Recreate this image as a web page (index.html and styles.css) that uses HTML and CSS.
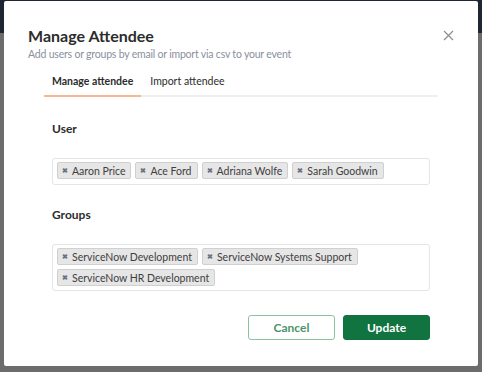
FILE: index.html
```html
<!DOCTYPE html>
<html lang="en">
<head>
    <meta charset="UTF-8">
    <title>Manage Attendee</title>
    <link rel="stylesheet" href="styles.css">
</head>
<body>

<div class="modal">
    <div class="modal-header">
        <div>
            <h1>Manage Attendee</h1>
            <p class="subtitle">Add users or groups by email or import via csv to your event</p>
        </div>
        <svg class="modal-close" width="11" height="11" viewBox="0 0 11 11">
            <path d="M1 1 L10 10 M10 1 L1 10" stroke="#8c9095" stroke-width="1.3" fill="none"/>
        </svg>
    </div>

    <div class="modal-body">
        <div class="tabs">
            <span class="tab active">Manage attendee</span>
            <span class="tab">Import attendee</span>
        </div>

        <div class="field">
            <label>User</label>
            <div class="chip-box">
                <span class="chip"><b>&#10006;</b>Aaron Price</span>
                <span class="chip"><b>&#10006;</b>Ace Ford</span>
                <span class="chip"><b>&#10006;</b>Adriana Wolfe</span>
                <span class="chip"><b>&#10006;</b>Sarah Goodwin</span>
            </div>
        </div>

        <div class="field">
            <label>Groups</label>
            <div class="chip-box">
                <span class="chip"><b>&#10006;</b>ServiceNow Development</span>
                <span class="chip"><b>&#10006;</b>ServiceNow Systems Support</span>
                <span class="chip"><b>&#10006;</b>ServiceNow HR Development</span>
            </div>
        </div>

        <div class="actions">
            <button class="btn btn-cancel">Cancel</button>
            <button class="btn btn-update">Update</button>
        </div>
    </div>
</div>

</body>
</html>
```

FILE: styles.css
```css
body {
    margin: 0;
    height: 372px;
    font-family: Lato, "Open Sans", sans-serif;
    background: linear-gradient(#1d2631 0, #1d2631 33px, #6c6c6c 33px);
    overflow: hidden;
}

.modal {
    margin: 1px 4px 0 4px;
    width: 474px;
    height: 365px;
    box-sizing: border-box;
    background-color: #fff;
    border-radius: 2px;
    padding: 25px 0 0 24px;
}

.modal-header {
    display: flex;
    justify-content: space-between;
    padding-right: 24px;
}

h1 {
    margin: 0;
    font-size: 16px;
    font-weight: bold;
    color: #2c2c2c;
}

.subtitle {
    margin: 3px 0 0 0;
    font-size: 10.5px;
    letter-spacing: -0.2px;
    color: #8a90a0;
}

.modal-close {
    margin-top: 4px;
    flex-shrink: 0;
}

.modal-body {
    width: 394px;
    margin-left: 16px;
}

.tabs {
    display: flex;
    margin-top: 15px;
    border-bottom: 2px solid #eeeeee;
}

.tab {
    padding: 0 8px 8px 8px;
    font-size: 10.5px;
    color: #2c2c2c;
    margin-bottom: -2px;
    border-bottom: 2px solid transparent;
}

.tab.active {
    font-weight: bold;
    border-bottom-color: #f6b793;
}

.tab + .tab {
    margin-left: 1px;
}

.field {
    padding: 0 8px;
}

.field label {
    display: block;
    margin-top: 24px;
    margin-bottom: 22px;
    font-size: 12px;
    font-weight: bold;
    color: #2c2c2c;
}

.field + .field label {
    margin-top: 22px;
}

.chip-box {
    display: flex;
    flex-wrap: wrap;
    gap: 4px;
    padding: 3px 4px 4px 4px;
    border: 1px solid #e2e5ea;
    border-radius: 3px;
    min-height: 18px;
}

.chip {
    display: flex;
    align-items: center;
    height: 17px;
    padding: 0 5px 0 4px;
    box-sizing: border-box;
    background-color: #e6e6e6;
    border: 1px solid #d0d0d0;
    border-radius: 2px;
    font-size: 10.5px;
    color: #3e3e3e;
}

.chip b {
    font-size: 7px;
    color: #6c7280;
    margin-right: 4px;
}

.actions {
    display: flex;
    justify-content: flex-end;
    gap: 8px;
    margin-top: 24px;
    padding-right: 8px;
}

.btn {
    width: 87px;
    height: 25px;
    border-radius: 3px;
    font-family: Lato, sans-serif;
    font-size: 12px;
    font-weight: bold;
    cursor: pointer;
}

.btn-cancel {
    background-color: #fff;
    color: #4b9469;
    border: 1px solid #8cc2a4;
}

.btn-update {
    background-color: #117340;
    color: #fff;
    border: 1px solid #117340;
}
```
